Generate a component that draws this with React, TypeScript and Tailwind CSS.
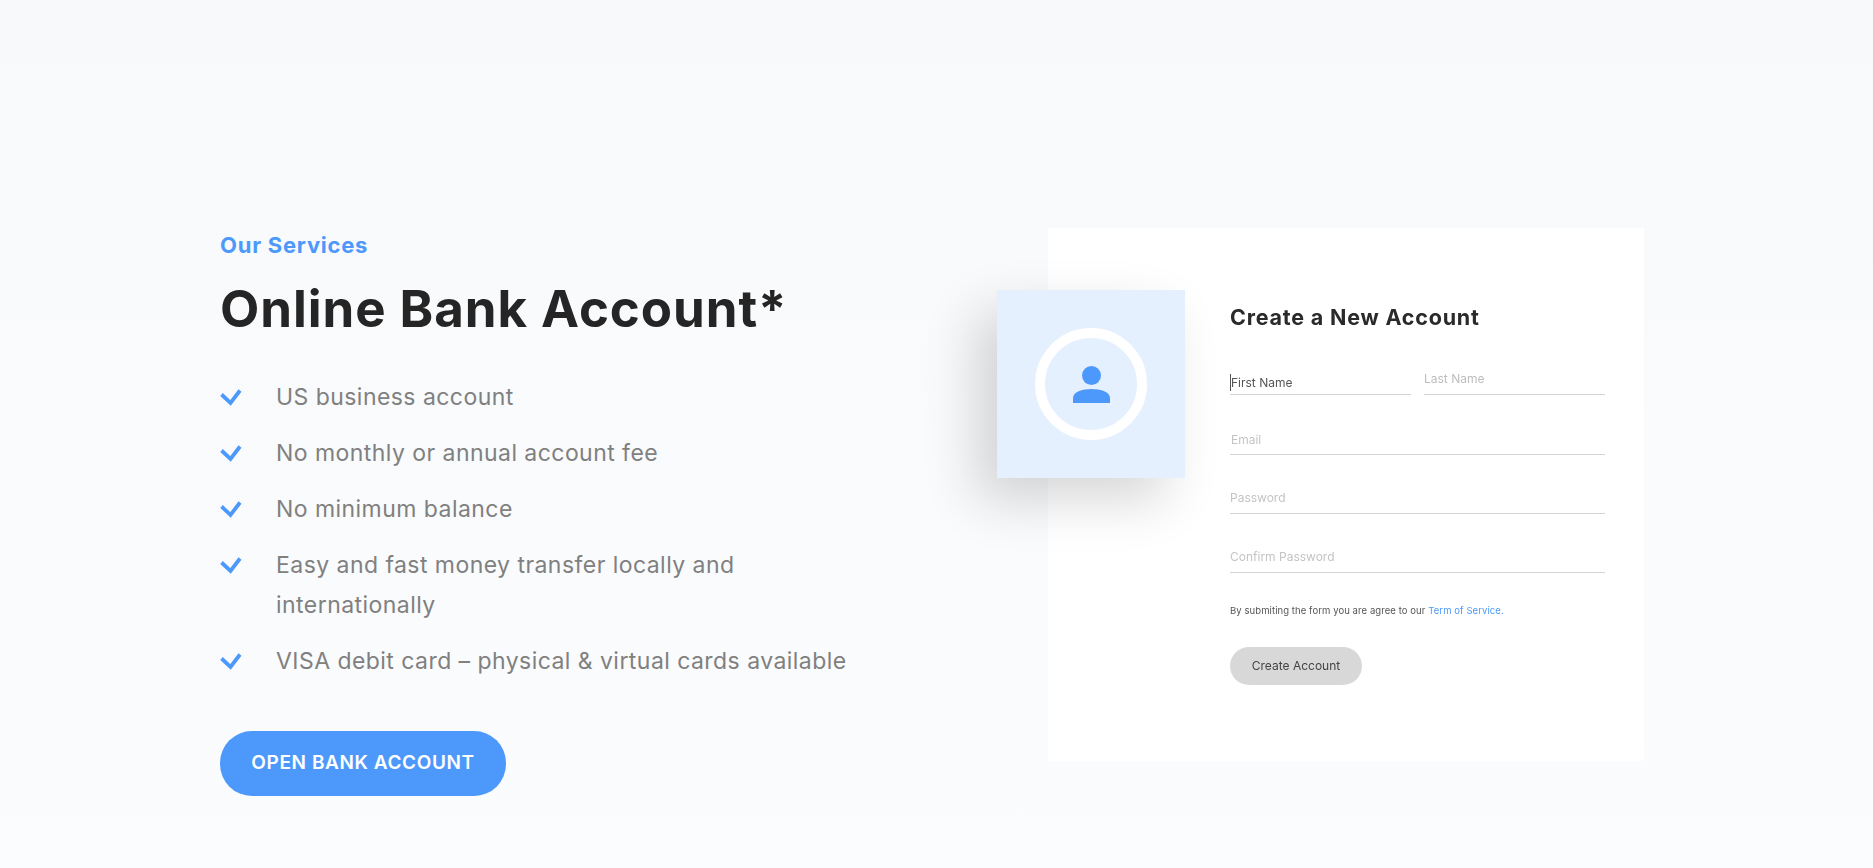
import React from 'react';

const benefits = [
  'US business account',
  'No monthly or annual account fee',
  'No minimum balance',
  'Easy and fast money transfer locally and internationally',
  'VISA debit card – physical & virtual cards available',
];

function Check() {
  return (
    <svg width="22" height="17" viewBox="0 0 22 17" fill="none" className="mt-[12px] shrink-0">
      <path d="M1.5 5.5 L10.5 14 L20 1.5" stroke="#4d99fb" strokeWidth="3.8" strokeLinejoin="miter" />
    </svg>
  );
}

function Field({ label, textClass }: { label: string; textClass: string }) {
  return (
    <div className="border-b border-[#d4d4d4] h-[30px] flex w-full">
      <span className={`text-[12px] leading-[16px] ${textClass}`}>{label}</span>
    </div>
  );
}

export default function App() {
  return (
    <div className="min-h-screen h-[868px] overflow-hidden bg-gradient-to-b from-[#f8f9fb] to-[#fbfcfe] pt-[228px] pl-[220px] flex font-['Inter',sans-serif]">
      {/* left column */}
      <div className="w-[660px] shrink-0">
        <div className="text-[22px] leading-[34px] font-bold text-[#4d99fb] tracking-[0.75px]">Our Services</div>
        <h1 className="mt-[17px] text-[51px] leading-[60px] font-bold text-[#252525] tracking-[0.95px]">Online Bank Account*</h1>
        <ul className="mt-[38px] flex flex-col gap-[16px]">
          {benefits.map((item) => (
            <li key={item} className="flex gap-[34px] text-[23px] leading-[40px] text-[#808080] tracking-[0.45px]">
              <Check />
              <span className="w-[590px]">{item}</span>
            </li>
          ))}
        </ul>
        <button className="mt-[50px] w-[286px] h-[65px] rounded-[32px] bg-[#4d99fb] text-white text-[19px] font-semibold tracking-[0.6px]">
          OPEN BANK ACCOUNT
        </button>
      </div>

      {/* sign up card */}
      <div className="ml-[168px] w-[596px] h-[533px] bg-white flex items-start">
        <div className="-ml-[51px] mt-[62px] w-[188px] h-[188px] shrink-0 bg-[#e5f0ff] shadow-[-20px_22px_50px_rgba(0,0,0,0.16)] flex items-center justify-center">
          <div className="w-[112px] h-[112px] rounded-full border-[10px] border-white flex items-center justify-center">
            <svg width="37" height="38" viewBox="0 0 37 38" className="mt-[2px]">
              <circle cx="18.5" cy="9.5" r="9.5" fill="#4d99fb" />
              <path d="M0 37 V32 C0 26 9 23 18.5 23 C28 23 37 26 37 32 V37 Z" fill="#4d99fb" />
            </svg>
          </div>
        </div>
        <div className="ml-[45px] mt-[71px] w-[375px] blur-[0.4px]">
          <h2 className="text-[21.5px] leading-[36px] font-bold text-[#2a2a2a] tracking-[0.8px]">Create a New Account</h2>
          <div className="mt-[24px] flex gap-[13px]">
            <div className="w-[181px] h-[36px] border-b border-[#d4d4d4] flex items-end pb-[3px]">
              <span className="w-px h-[17px] bg-[#555]" />
              <span className="text-[12px] leading-[16px] text-[#555]">First Name</span>
            </div>
            <div className="w-[181px] h-[36px] border-b border-[#d4d4d4] flex items-end pb-[7px]">
              <span className="text-[12px] leading-[16px] text-[#bdbdbd]">Last Name</span>
            </div>
          </div>
          <div className="mt-[30px] flex flex-col gap-[29px]">
            <Field label="Email" textClass="text-[#c4c4c4] pl-[1px] mt-[7px]" />
            <Field label="Password" textClass="text-[#c4c4c4] mt-[6px]" />
            <Field label="Confirm Password" textClass="text-[#c4c4c4] mt-[6px]" />
          </div>
          <p className="mt-[31px] text-[9.5px] leading-[14px] text-[#555] tracking-[0.08px]">
            By submiting the form you are agree to our <span className="text-[#4d99fb]">Term of Service.</span>
          </p>
          <button className="mt-[29px] w-[132px] h-[38px] rounded-[19px] bg-[#d8d8d8] text-[12px] text-[#444]">Create Account</button>
        </div>
      </div>
    </div>
  );
}
